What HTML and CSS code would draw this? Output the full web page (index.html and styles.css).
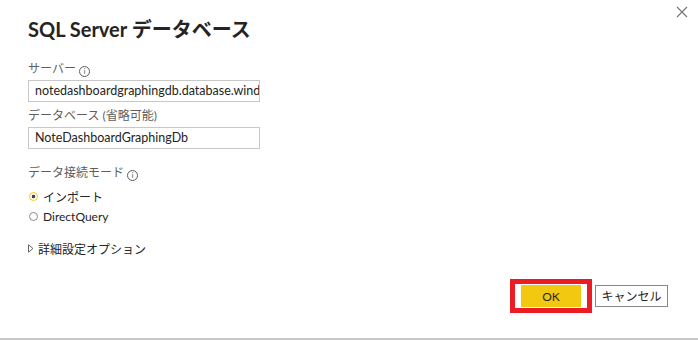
FILE: index.html
```html
<!DOCTYPE html>
<html lang="ja">
<head>
<meta charset="UTF-8" />
<title>SQL Server データベース</title>
<link rel="stylesheet" href="styles.css">
</head>
<body>
  <div class="dialog">
    <button class="close" type="button" aria-label="閉じる">
      <svg width="12" height="12" viewBox="0 0 12 12"><path d="M1 1L11 11M11 1L1 11" stroke="#777" stroke-width="1.2" fill="none"/></svg>
    </button>

    <h1 class="title">SQL Server データベース</h1>

    <label class="label">サーバー <span class="info">i</span></label>
    <div class="field">notedashboardgraphingdb.database.windows.net</div>

    <label class="label">データベース (省略可能)</label>
    <div class="field">NoteDashboardGraphingDb</div>

    <div class="label mode">データ接続モード <span class="info">i</span></div>
    <div class="radio first checked"><span class="dot"></span>インポート</div>
    <div class="radio"><span class="dot"></span>DirectQuery</div>

    <div class="advanced">
      <svg width="6" height="9" viewBox="0 0 6 9"><path d="M0.5 0.8L5 4.5L0.5 8.2Z" fill="none" stroke="#666" stroke-width="1"/></svg>
      詳細設定オプション
    </div>

    <div class="actions">
      <div class="highlight">
        <button class="btn ok" type="button">OK</button>
      </div>
      <button class="btn cancel" type="button">キャンセル</button>
    </div>
  </div>
</body>
</html>
```

FILE: styles.css
```css
* {
  box-sizing: border-box;
}
body {
  margin: 0;
  background: #fff;
  font-family: Lato, "Noto Sans CJK JP", sans-serif;
  color: #252423;
}

.dialog {
  position: relative;
  width: 698px;
  height: 340px;
  padding: 14px 28px 0 28px;
  border-bottom: 2px solid #c8c8c8;
}

.close {
  position: absolute;
  top: 6px;
  right: 10px;
  border: none;
  background: none;
  padding: 0;
  width: 12px;
  height: 12px;
}

.title {
  margin: 0 0 17px 0;
  font-size: 20px;
  font-weight: 700;
  line-height: 30px;
  color: #252423;
}

.label {
  display: block;
  font-size: 12px;
  line-height: 16px;
  color: #605e5c;
  margin-bottom: 3px;
}
.label.mode {
  margin-top: 16px;
}

.info {
  display: inline-block;
  width: 11px;
  height: 11px;
  border: 1px solid #605e5c;
  border-radius: 50%;
  font-size: 8px;
  line-height: 9px;
  text-align: center;
  vertical-align: -1px;
}

.field {
  width: 232px;
  height: 22px;
  border: 1px solid #c8c8c8;
  padding: 0 6px;
  font-size: 12.5px;
  line-height: 20px;
  color: #252423;
  white-space: nowrap;
  overflow: hidden;
  margin-bottom: 6px;
}

.radio {
  display: flex;
  align-items: center;
  gap: 5px;
  font-size: 12px;
  height: 20px;
  color: #252423;
}
.radio.first {
  margin-top: 5px;
}
.dot {
  width: 9px;
  height: 9px;
  border-radius: 50%;
  border: 1.5px solid #8a8886;
  margin-left: 1px;
}
.radio.checked .dot {
  border-color: #f2c811;
  background: radial-gradient(circle, #444 0 1.6px, #fff 2.1px);
}

.advanced {
  display: flex;
  align-items: center;
  gap: 4px;
  height: 18px;
  margin-top: 13px;
  font-size: 12px;
  color: #252423;
}

.actions {
  position: absolute;
  right: 30px;
  bottom: 25px;
  display: flex;
  align-items: center;
  gap: 3px;
}

.highlight {
  border: 5px solid #ed1c24;
  padding: 1px 6px;
}

.btn {
  height: 22px;
  font-family: Lato, "Noto Sans CJK JP", sans-serif;
  font-size: 12px;
  color: #252423;
  padding: 0;
}
.ok {
  width: 60px;
  background: #f2c811;
  border: none;
}
.cancel {
  width: 73px;
  background: #fff;
  border: 1px solid #8a8886;
}
```
